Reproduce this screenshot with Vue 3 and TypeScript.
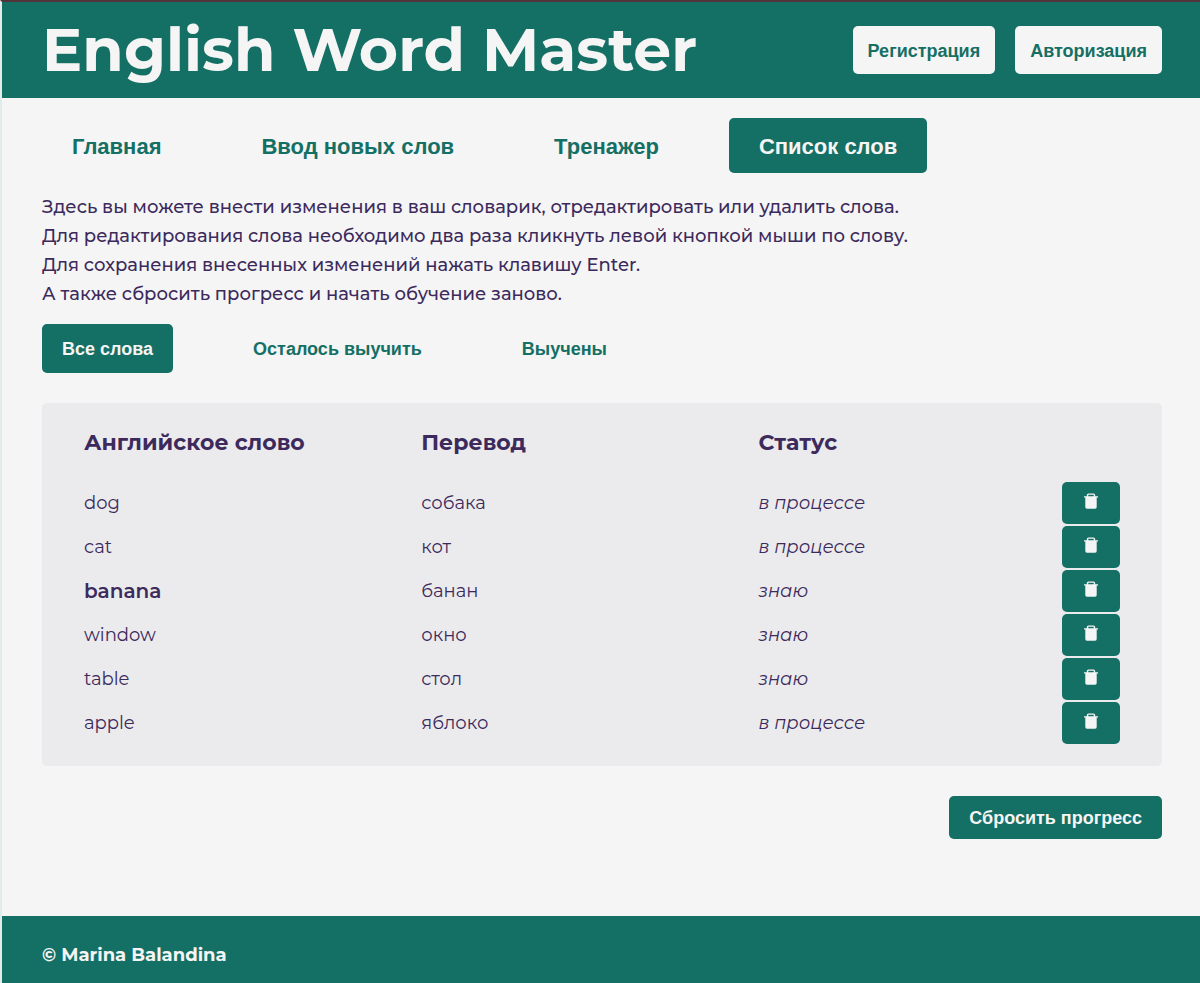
<script setup lang="ts">
import { computed, ref } from 'vue'

interface Word {
  english: string
  translation: string
  known: boolean
  selected?: boolean
}

type Filter = 'all' | 'left' | 'learned'

const pages = ['Главная', 'Ввод новых слов', 'Тренажер', 'Список слов']
const currentPage = ref('Список слов')

const filters: { id: Filter; label: string }[] = [
  { id: 'all', label: 'Все слова' },
  { id: 'left', label: 'Осталось выучить' },
  { id: 'learned', label: 'Выучены' },
]
const currentFilter = ref<Filter>('all')

const words = ref<Word[]>([
  { english: 'dog', translation: 'собака', known: false },
  { english: 'cat', translation: 'кот', known: false },
  { english: 'banana', translation: 'банан', known: true, selected: true },
  { english: 'window', translation: 'окно', known: true },
  { english: 'table', translation: 'стол', known: true },
  { english: 'apple', translation: 'яблоко', known: false },
])

const visibleWords = computed(() =>
  words.value.filter((word) => {
    if (currentFilter.value === 'all') return true
    return currentFilter.value === 'learned' ? word.known : !word.known
  }),
)

function removeWord(word: Word) {
  words.value = words.value.filter((item) => item !== word)
}

function resetProgress() {
  words.value.forEach((word) => (word.known = false))
}
</script>

<template>
  <div class="page">
    <header class="header">
      <h1 class="title">English Word Master</h1>
      <div class="auth">
        <button type="button" class="btn btn-light">Регистрация</button>
        <button type="button" class="btn btn-light">Авторизация</button>
      </div>
    </header>

    <main class="main">
      <nav class="nav">
        <button
          v-for="page in pages"
          :key="page"
          type="button"
          class="btn nav-btn"
          :class="{ active: page === currentPage }"
          @click="currentPage = page"
        >
          {{ page }}
        </button>
      </nav>

      <div class="intro">
        <p>Здесь вы можете внести изменения в ваш словарик, отредактировать или удалить слова.</p>
        <p>Для редактирования слова необходимо два раза кликнуть левой кнопкой мыши по слову.</p>
        <p>Для сохранения внесенных изменений нажать клавишу Enter.</p>
        <p>А также сбросить прогресс и начать обучение заново.</p>
      </div>

      <div class="filters">
        <button
          v-for="filter in filters"
          :key="filter.id"
          type="button"
          class="btn filter-btn"
          :class="{ active: filter.id === currentFilter }"
          @click="currentFilter = filter.id"
        >
          {{ filter.label }}
        </button>
      </div>

      <section class="panel">
        <table class="words">
          <colgroup>
            <col class="col-word" />
            <col class="col-word" />
            <col />
            <col class="col-action" />
          </colgroup>
          <thead>
            <tr>
              <th scope="col">Английское слово</th>
              <th scope="col">Перевод</th>
              <th scope="col">Статус</th>
              <td></td>
            </tr>
          </thead>
          <tbody>
            <tr v-for="word in visibleWords" :key="word.english">
              <td :class="{ selected: word.selected }">{{ word.english }}</td>
              <td>{{ word.translation }}</td>
              <td class="status">{{ word.known ? 'знаю' : 'в процессе' }}</td>
              <td>
                <button
                  type="button"
                  class="btn delete-btn"
                  :aria-label="'Удалить ' + word.english"
                  @click="removeWord(word)"
                >
                  <svg class="trash" viewBox="0 0 14 16" aria-hidden="true">
                    <path
                      fill-rule="evenodd"
                      d="M0 3.200h2.800V2Q2.800.400 4.400.400h5.200Q11.200.400 11.200 2v1.200H14v1.300h-1.300v9.600q0 1.600-1.600 1.600H2.900q-1.600 0-1.600-1.600V4.500H0zM4.300 1.700v1.500h5.400V1.700z"
                    />
                  </svg>
                </button>
              </td>
            </tr>
          </tbody>
        </table>
      </section>

      <button type="button" class="btn reset-btn" @click="resetProgress">Сбросить прогресс</button>
    </main>

    <footer class="footer">© Marina Balandina</footer>
  </div>
</template>

<style>
body {
  margin: 0;
}
</style>

<style scoped>
.page {
  --green: #146f64;
  --light: #f5f5f5;
  --ink: #3c2a5c;
  box-sizing: border-box;
  min-height: 100vh;
  display: flex;
  flex-direction: column;
  border-top: 2px solid #513439;
  border-left: 2px solid #e0ebeb;
  background: var(--light);
  color: var(--ink);
  font-family: Montserrat, Inter, sans-serif;
  font-size: 18px;
}

.header {
  display: flex;
  align-items: center;
  justify-content: space-between;
  gap: 20px;
  height: 96px;
  padding: 0 38px 0 40px;
  background: var(--green);
}

.title {
  margin: 0;
  color: var(--light);
  font-size: 60px;
  font-weight: 700;
  line-height: 72px;
}

.auth {
  display: flex;
  gap: 20px;
}

.btn {
  border: 0;
  border-radius: 5px;
  background: transparent;
  color: var(--green);
  font-family: "Liberation Sans", Arial, sans-serif;
  font-size: 18px;
  font-weight: 700;
  line-height: 21px;
  white-space: nowrap;
  cursor: pointer;
}

.btn-light {
  padding: 15px 15px 12px;
  background: var(--light);
}

.main {
  flex: 1;
  display: flex;
  flex-direction: column;
  padding: 20px 38px 40px 40px;
}

.nav {
  display: flex;
  gap: 40px;
}

.nav-btn {
  padding: 16px 30px 14px;
  font-size: 22px;
  line-height: 25px;
}

.active,
.delete-btn,
.reset-btn {
  background: var(--green);
  color: var(--light);
}

.intro {
  margin: 20px 0 15px;
  font-weight: 500;
  line-height: 29px;
}

.intro p {
  margin: 0;
}

.filters {
  display: flex;
  gap: 60px;
}

.filter-btn {
  padding: 15px 20px 13px;
}

.panel {
  margin-top: 30px;
  padding: 20px 40px;
  border-radius: 5px;
  background: #ebebed;
}

.words {
  width: 100%;
  table-layout: fixed;
  border-spacing: 2px;
}

.words th,
.words td {
  padding: 0;
  text-align: left;
  font-weight: 400;
}

.words th {
  padding: 3px 0 23px;
  font-size: 22px;
  font-weight: 700;
  line-height: 29px;
}

.col-word {
  width: 32.55%;
}

.col-action {
  width: 58px;
}

.words td.selected {
  font-size: 20px;
  font-weight: 600;
}

.status {
  font-style: italic;
}

.delete-btn {
  display: block;
  width: 58px;
  height: 42px;
  padding: 0 0 4px;
}

.trash {
  display: block;
  width: 14px;
  height: 16px;
  margin: 0 auto;
  fill: var(--light);
}

.reset-btn {
  align-self: flex-end;
  margin-top: 30px;
  padding: 12px 20px 10px;
}

.footer {
  padding: 28px 40px 17px;
  background: var(--green);
  color: var(--light);
  font-weight: 700;
  line-height: 22px;
}
</style>
